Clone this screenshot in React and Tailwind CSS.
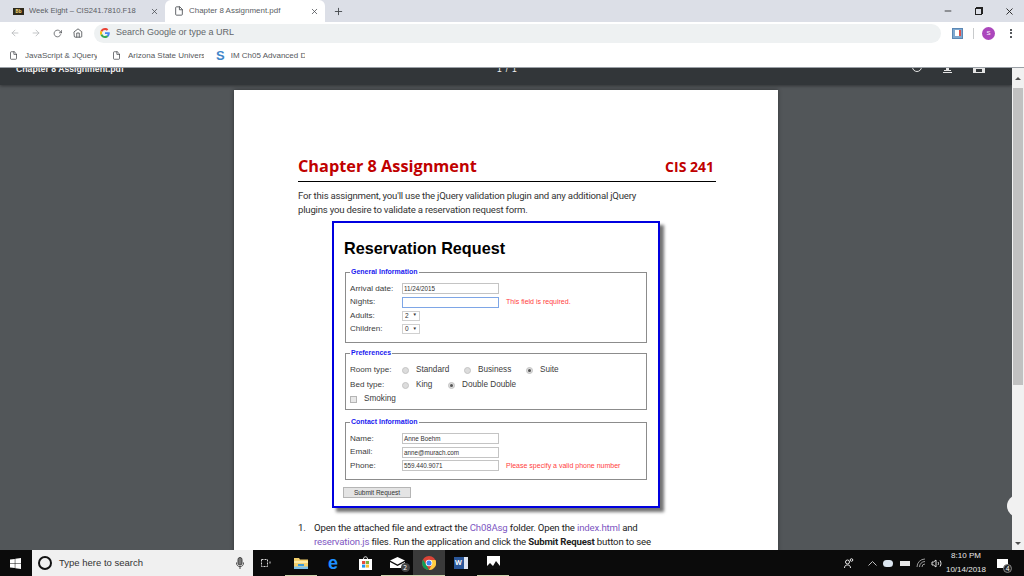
import { FiX, FiPlus, FiMinus, FiArrowLeft, FiArrowRight, FiHome, FiRotateCw, FiFile } from 'react-icons/fi';

const sans = "font-['Liberation_Sans',Arial,sans-serif]";
const body = "font-['Roboto',sans-serif]";

const bookmarks = [
  { label: 'JavaScript & JQuery:', width: 'w-[72px]', gap: 'mr-[15px]' },
  { label: 'Arizona State Univers', width: 'w-[76px]', gap: 'mr-[12px]' },
];

function GoogleG() {
  return (
    <svg width="10" height="10" viewBox="0 0 48 48" className="shrink-0">
      <path fill="#ea4335" d="M24 9.5c3.5 0 6.700 1.300 9.100 3.500l6.800-6.800C35.800 2.400 30.300 0 24 0 14.600 0 6.500 5.400 2.600 13.200l7.900 6.100C12.400 13.600 17.700 9.500 24 9.500z" />
      <path fill="#4285f4" d="M47 24.500c0-1.600-.1-3.100-.4-4.500H24v9h12.900c-.6 3-2.200 5.500-4.700 7.200l7.700 6c4.500-4.200 7.100-10.300 7.100-17.700z" />
      <path fill="#fbbc05" d="M10.500 28.700c-.5-1.400-.8-3-.8-4.700s.3-3.200.8-4.700l-7.900-6.100C.9 16.500 0 20.100 0 24s.9 7.500 2.600 10.800l7.900-6.100z" />
      <path fill="#34a853" d="M24 48c6.500 0 11.900-2.100 15.900-5.800l-7.700-6c-2.200 1.400-4.900 2.300-8.200 2.300-6.300 0-11.600-4.200-13.500-9.800l-7.900 6.100C6.500 42.600 14.600 48 24 48z" />
    </svg>
  );
}

function Tab({ active, icon, title, width, titleSize }) {
  return (
    <div className={`${width} h-[22px] flex items-center pl-[9px] pr-[6px] gap-[5px] ${active ? 'bg-white rounded-t-[6px]' : ''}`}>
      {icon}
      <span className={`flex-1 ${titleSize} text-[#5a5d63] whitespace-nowrap overflow-hidden ${sans}`}>{title}</span>
      <FiX size={9} className="text-[#45484d]" />
    </div>
  );
}

function BrowserChrome() {
  return (
    <div className="bg-white">
      {/* tabs */}
      <div className="h-[22px] bg-[#dcdfe7] flex items-center">
        <div className="w-[165px] pl-[4px]">
          <Tab
            width="w-[161px]"
            titleSize="text-[7.600px]"
            title="Week Eight – CIS241.7810.F18"
            icon={<span className="w-[11px] h-[7px] bg-[#2e2a1c] text-[#e6c869] text-[5px] font-bold leading-[7px] text-center shrink-0">Bb</span>}
          />
        </div>
        <Tab active width="w-[160px]" titleSize="text-[7.950px]" title="Chapter 8 Assignment.pdf" icon={<FiFile size={10} className="text-[#45484d] shrink-0" />} />
        <FiPlus size={11} className="ml-[8px] text-[#45484d]" />
        <div className="ml-auto flex items-center gap-[22px] pr-[9px]">
          <FiMinus size={10} className="text-[#222]" />
          <div className="w-[7px] h-[7px] border border-[#222] shadow-[1px_-1px_0_#222]" />
          <FiX size={11} className="text-[#222]" />
        </div>
      </div>

      {/* address bar */}
      <div className="h-[22px] flex items-center pl-[10px]">
        <FiArrowLeft size={10} className="text-[#b8babd]" />
        <FiArrowRight size={10} className="ml-[11px] text-[#b8babd]" />
        <FiRotateCw size={9} className="ml-[12px] text-[#4c4f53]" />
        <FiHome size={10} className="ml-[11px] text-[#4c4f53]" />
        <div className="ml-[11px] h-[19px] w-[847px] rounded-full bg-[#eef1f2] flex items-center pl-[6px] gap-[6px]">
          <GoogleG />
          <span className={`text-[9px] text-[#62666a] ${sans}`}>Search Google or type a URL</span>
        </div>
        <div className="ml-[11px] w-[11px] h-[11px] bg-[#7fa9d0] border border-[#5b87b4] flex items-center justify-center">
          <div className="w-[6px] h-[6px] bg-white border-r-2 border-[#d9534f]" />
        </div>
        <div className="ml-[10px] w-px h-[11px] bg-[#c8cacc]" />
        <div className={`ml-[8px] w-[13px] h-[13px] rounded-full bg-[#ab47bc] text-white text-[6px] flex items-center justify-center ${sans}`}>S</div>
        <div className="ml-[15px] flex flex-col gap-[1.500px]">
          <span className="w-[2px] h-[2px] bg-[#55585c]" />
          <span className="w-[2px] h-[2px] bg-[#55585c]" />
          <span className="w-[2px] h-[2px] bg-[#55585c]" />
        </div>
      </div>

      {/* bookmarks */}
      <div className={`h-[23px] flex items-center pl-[9px] text-[8px] text-[#55585c] ${sans} border-b border-[#9aa0a6] box-content`}>
        {bookmarks.map(b => (
          <div key={b.label} className={`flex items-center gap-[7px] ${b.gap}`}>
            <FiFile size={9} className="text-[#45484d] shrink-0" />
            <span className={`${b.width} overflow-hidden whitespace-nowrap`}>{b.label}</span>
          </div>
        ))}
        <span className="text-[#3f86c9] font-bold text-[13px] leading-none mr-[6px]">S</span>
        <span className="w-[74px] overflow-hidden whitespace-nowrap">IM Ch05 Advanced D</span>
      </div>
    </div>
  );
}

function PdfToolbar() {
  return (
    <div className="h-[17px] shrink-0 bg-[#323639] overflow-hidden flex items-start pl-[16px] pr-[27px] text-[#f1f1f1] shadow-[0_1px_3px_rgba(0,0,0,0.4)] relative">
      <span className={`w-[481px] -mt-[5px] text-[8.700px] font-bold leading-[12px] ${sans}`}>Chapter 8 Assignment.pdf</span>
      <span className={`-mt-[5px] text-[8.500px] leading-[12px] tracking-[0.8px] ${sans}`}>1 / 1</span>
      <div className="ml-auto flex items-start gap-[21px]">
        <div className="-mt-[6px] w-[10px] h-[10px] rounded-full border border-[#e4e4e4]" />
        <div className="flex flex-col items-center">
          <div className="w-[3px] h-[2px] bg-[#e4e4e4]" />
          <div className="w-[7px] h-[1px] bg-[#e4e4e4]" />
          <div className="w-[9px] h-[1px] mt-[1px] bg-[#e4e4e4]" />
        </div>
        <div className="w-[12px] h-[5px] bg-[#e4e4e4] flex justify-center">
          <div className="w-[6px] h-[3px] mt-[1px] bg-[#323639]" />
        </div>
      </div>
    </div>
  );
}

function Field({ label, children }) {
  return (
    <div className="flex items-center h-[13.500px]">
      <span className="w-[52px] text-[8.100px] text-[#3c3c3c]">{label}</span>
      {children}
    </div>
  );
}

function TextBox({ value, focus }) {
  return (
    <div className={`w-[97px] h-[11px] border ${focus ? 'border-[#7ea6e6]' : 'border-[#c4c4c4]'} bg-white text-[6.300px] leading-[9px] pl-[1px] text-[#333]`}>
      {value}
    </div>
  );
}

function Select({ value }) {
  return (
    <div className="w-[18px] h-[10px] border border-[#d0d0d0] bg-white flex items-center justify-between px-[2px] text-[6.500px] text-[#333]">
      <span>{value}</span>
      <span className="text-[4.500px]">▼</span>
    </div>
  );
}

function Radio({ checked, label, className }) {
  return (
    <div className={`flex items-center ${className}`}>
      <div className="w-[7px] h-[7px] rounded-full bg-[#dcdcdc] border border-[#c4c4c4] flex items-center justify-center">
        {checked && <div className="w-[3px] h-[3px] rounded-full bg-[#555]" />}
      </div>
      <span className="ml-[7px] text-[8.200px] text-[#3c3c3c]">{label}</span>
    </div>
  );
}

function Group({ title, className, children }) {
  return (
    <fieldset className={`mx-[11px] border border-[#8c8c8c] px-[4px] ${className}`}>
      <legend className="px-[1px] text-[7px] font-bold leading-[8px] text-[#1a1af0]">{title}</legend>
      {children}
    </fieldset>
  );
}

function ReservationForm() {
  return (
    <div className={`ml-[98px] mt-[4px] w-[328px] h-[287px] border-[2px] border-[#0000e0] bg-white shadow-[4px_4px_3px_rgba(0,0,0,0.55)] ${sans} flex flex-col`}>
      <h1 className="ml-[10px] mt-[13px] h-[24px] text-[16.200px] font-bold leading-[24px] text-black">Reservation Request</h1>

      <Group title="General Information" className="mt-[8px] h-[75px] pt-[6px]">
        <Field label="Arrival date:"><TextBox value="11/24/2015" /></Field>
        <Field label="Nights:">
          <TextBox value="" focus />
          <span className="ml-[7px] text-[7px] text-[#ff4040]">This field is required.</span>
        </Field>
        <Field label="Adults:"><Select value="2" /></Field>
        <Field label="Children:"><Select value="0" /></Field>
      </Group>

      <Group title="Preferences" className="mt-[6px] h-[61px] pt-[6px]">
        <div className="flex items-center h-[15px]">
          <span className="w-[52px] text-[8.100px] text-[#3c3c3c]">Room type:</span>
          <Radio label="Standard" className="w-[62px]" />
          <Radio label="Business" className="w-[62px]" />
          <Radio checked label="Suite" />
        </div>
        <div className="flex items-center h-[14.500px]">
          <span className="w-[52px] text-[8.100px] text-[#3c3c3c]">Bed type:</span>
          <Radio label="King" className="w-[46px]" />
          <Radio checked label="Double Double" />
        </div>
        <div className="flex items-center h-[14px]">
          <div className="w-[7px] h-[7px] bg-[#e8e8e8] border border-[#b5b5b5]" />
          <span className="ml-[7px] text-[8.200px] text-[#3c3c3c]">Smoking</span>
        </div>
      </Group>

      <Group title="Contact Information" className="mt-[8px] h-[62px] pt-[6px]">
        <Field label="Name:"><TextBox value="Anne Boehm" /></Field>
        <Field label="Email:"><TextBox value="anne@murach.com" /></Field>
        <Field label="Phone:">
          <TextBox value="559.440.9071" />
          <span className="ml-[7px] text-[7px] text-[#ff4040]">Please specify a valid phone number</span>
        </Field>
      </Group>

      <button className="ml-[9px] mt-[7px] w-[68px] h-[11px] bg-[#e4e4e4] border border-[#b5b5b5] text-[6.500px] leading-[9px] text-[#333]">Submit Request</button>
    </div>
  );
}

function PdfPage() {
  return (
    <div className="ml-[234px] mt-[5px] w-[544px] h-[600px] shrink-0 bg-white shadow-[0_0_4px_rgba(0,0,0,0.4)] pt-[66px]">
      <div className="ml-[64px] w-[418px] h-[26px] pr-[2px] flex items-end justify-between border-b-[1.500px] border-black pb-[4px] font-['Open_Sans',sans-serif] font-bold text-[#c00000]">
        <span className="text-[16.300px] leading-[22px]">Chapter 8 Assignment</span>
        <span className="text-[14px] leading-[21px]">CIS 241</span>
      </div>
      <p className={`ml-[64px] mt-[7px] w-[345px] text-[9.600px] leading-[14px] text-[#333] tracking-[-0.2px] ${body}`}>
        For this assignment, you'll use the jQuery validation plugin and any additional jQuery plugins you desire to validate a reservation request form.
      </p>
      <ReservationForm />
      <div className={`ml-[64px] mt-[13px] flex text-[9.600px] leading-[14px] text-[#222] tracking-[-0.16px] ${body}`}>
        <span className="w-[16px]">1.</span>
        <p className="w-[345px]">
          Open the attached file and extract the <span className="text-[#7e57c2]">Ch08Asg</span> folder. Open the <span className="text-[#7e57c2]">index.html</span> and <span className="text-[#7e57c2]">reservation.js</span> files. Run the application and click the <b>Submit Request</b> button to see
        </p>
      </div>
    </div>
  );
}

function Scrollbar() {
  return (
    <div className="w-[12px] bg-[#f1f1f1] flex flex-col items-center justify-between">
      <div className="w-full">
        <div className="h-[20px] flex items-center justify-center">
          <div className="border-x-[3px] border-b-[3px] border-x-transparent border-b-[#505050]" />
        </div>
        <div className="h-[297px] mx-[1px] bg-[#c1c1c1]" />
      </div>
      <div className="h-[14px] flex items-center justify-center">
        <div className="border-x-[3px] border-t-[3px] border-x-transparent border-t-[#505050]" />
      </div>
    </div>
  );
}

function TaskIcon({ active, running, children }) {
  return (
    <div className={`w-[32px] h-[26px] flex items-center justify-center border-b ${running ? 'border-[#cfd6b0]' : 'border-transparent'} ${active ? 'bg-[#3a3a3a]' : ''}`}>
      {children}
    </div>
  );
}

function Taskbar() {
  return (
    <div className="h-[26px] bg-[#0b0b0b] flex items-center text-white">
      <svg width="11" height="11" viewBox="0 0 11 11" className="ml-[10px]">
        <path fill="#fff" d="M0 1.600 4.800.9v4.300H0zM5.300.8 11 0v5.200H5.300zM0 5.700h4.800v4.400L0 9.400zM5.300 5.700H11V11l-5.700-.8z" />
      </svg>
      <div className="ml-[11px] w-[221px] h-[26px] bg-[#f0f0f0] flex items-center pl-[6px] pr-[9px]">
        <div className="w-[14px] h-[14px] rounded-full border-2 border-[#111]" />
        <span className={`ml-[7px] text-[9.500px] text-[#333] ${sans}`}>Type here to search</span>
        <svg width="8" height="12" viewBox="0 0 8 12" className="ml-auto" fill="none" stroke="#444">
          <rect x="2" y="0.500" width="4" height="7.500" rx="2" fill="#777" />
          <path d="M.5 5.500c0 3 1.500 4 3.500 4s3.500-1 3.500-4M4 9.500V12" />
        </svg>
      </div>
      <div className="w-[26px] flex justify-center">
        <svg width="12" height="12" viewBox="0 0 12 12" fill="none" stroke="#d8d8d8">
          <rect x="1.500" y="2.500" width="6" height="7" strokeDasharray="2 1" />
          <path d="M10 4.500v2" />
        </svg>
      </div>
      <div className="ml-[6px] flex">
        <TaskIcon running>
          <svg width="14" height="12" viewBox="0 0 14 12">
            <path fill="#f3cf6b" d="M0 1h5l1 1.500h8V12H0z" />
            <path fill="#fbe9a6" d="M0 4h14v2H0z" />
            <path fill="#3b9ad9" d="M4 7h6v2H4z" />
            <path fill="#7cc0ea" d="M0 9.500h14V12H0z" />
          </svg>
        </TaskIcon>
        <TaskIcon>
          <span className={`text-[#1e90ff] text-[18px] leading-none font-bold ${sans}`}>e</span>
        </TaskIcon>
        <TaskIcon>
          <svg width="13" height="14" viewBox="0 0 13 14">
            <path fill="none" stroke="#e8e8e8" d="M4.500 3c0-3 4-3 4 0" />
            <path fill="#fff" d="M0 3h13v11H0z" />
            <path fill="#e74c3c" d="M3 5h3.200v3H3z" />
            <path fill="#7cb342" d="M6.800 5H10v3H6.800z" />
            <path fill="#2196f3" d="M3 8.600h3.200v3H3z" />
            <path fill="#fbc02d" d="M6.800 8.600H10v3H6.800z" />
          </svg>
        </TaskIcon>
        <TaskIcon running>
          <div className="relative">
            <svg width="15" height="11" viewBox="0 0 15 11" className="block">
              <path fill="#fff" d="M0 3.500 7.500 0 15 3.500 7.500 7.500zM0 5l7.500 4L15 5v6H0z" />
            </svg>
            <span className="absolute -right-[5px] -bottom-[4px] w-[9px] h-[9px] rounded-full bg-[#444] text-[6.500px] leading-[9px] text-center">2</span>
          </div>
        </TaskIcon>
        <TaskIcon active running>
          <svg width="14" height="14" viewBox="0 0 14 14">
            <circle cx="7" cy="7" r="7" fill="#db4437" />
            <path fill="#0f9d58" d="M7 14A7 7 0 0 1 1 3.500L4 8.500 7 14z" />
            <path fill="#ffcd40" d="M7 14 10 8.500 7 4h6.500A7 7 0 0 1 7 14z" />
            <circle cx="7" cy="7" r="3.300" fill="#fff" />
            <circle cx="7" cy="7" r="2.500" fill="#4285f4" />
          </svg>
        </TaskIcon>
        <TaskIcon>
          <div className="w-[14px] h-[12px] bg-[#2b579a] text-[7px] leading-[12px] pl-[1px] font-bold border-r-[4px] border-[#dfe6f2]">W</div>
        </TaskIcon>
        <TaskIcon running>
          <div className="w-[13px] h-[13px] bg-white flex items-end">
            <svg width="13" height="9" viewBox="0 0 13 9"><path fill="#111" d="M0 9V6l3-3 3 3 3-5 4 5v3z" /></svg>
          </div>
        </TaskIcon>
      </div>

      <div className="ml-auto flex items-center">
        <svg width="10" height="10" viewBox="0 0 10 10" fill="none" stroke="#e8e8e8" className="mr-[14px]">
          <circle cx="3.500" cy="4" r="2" /><path d="M.5 10c0-2 1-3 3-3s3 1 3 3" /><circle cx="7.500" cy="2" r="1.300" />
        </svg>
        <svg width="9" height="5" viewBox="0 0 9 5" fill="none" stroke="#bdbdbd" className="mr-[6px]"><path d="M.5 4.500l4-4 4 4" /></svg>
        <div className="w-[10px] h-[7px] rounded-full bg-[#dce6f0] mr-[7px]" />
        <div className="w-[10px] h-[5px] bg-[#e8e8e8] mr-[6px]" />
        <svg width="10" height="10" viewBox="0 0 10 10" fill="none" stroke="#9a9a9a" className="mr-[5px]"><path d="M1 9a8 8 0 0 1 8-8M3.500 9a5.500 5.500 0 0 1 5.500-5.500M6 9a3 3 0 0 1 3-3" /></svg>
        <svg width="11" height="9" viewBox="0 0 11 9" fill="none" stroke="#e0e0e0"><path d="M1 3v3h1.500L5 8V1L2.500 3zM7 3c.7 1 .7 2 0 3M9 1.500c1.300 2 1.300 4 0 6" /></svg>
        <div className={`w-[48px] text-center text-[8px] leading-[14px] text-[#e8e8e8] ${sans}`}>
          <div>8:10 PM</div>
          <div>10/14/2018</div>
        </div>
        <div className="ml-[7px] mr-[16px] w-[11px] h-[9px] bg-white relative">
          <span className="absolute -right-[4px] -bottom-[5px] w-[9px] h-[9px] rounded-full bg-[#222] border border-[#888] text-[6.500px] leading-[7px] text-center">4</span>
        </div>
      </div>
    </div>
  );
}

export default function App() {
  return (
    <div className="w-[1024px] h-[576px] overflow-hidden flex flex-col bg-[#525659]">
      <BrowserChrome />
      <div className="h-[482px] flex relative overflow-hidden">
        <div className="flex-1 overflow-hidden flex flex-col">
          <PdfToolbar />
          <PdfPage />
        </div>
        <Scrollbar />
        <div className="absolute -right-[5px] top-[427px] w-[22px] h-[22px] rounded-full bg-[#f1f1f1]" />
      </div>
      <Taskbar />
    </div>
  );
}
